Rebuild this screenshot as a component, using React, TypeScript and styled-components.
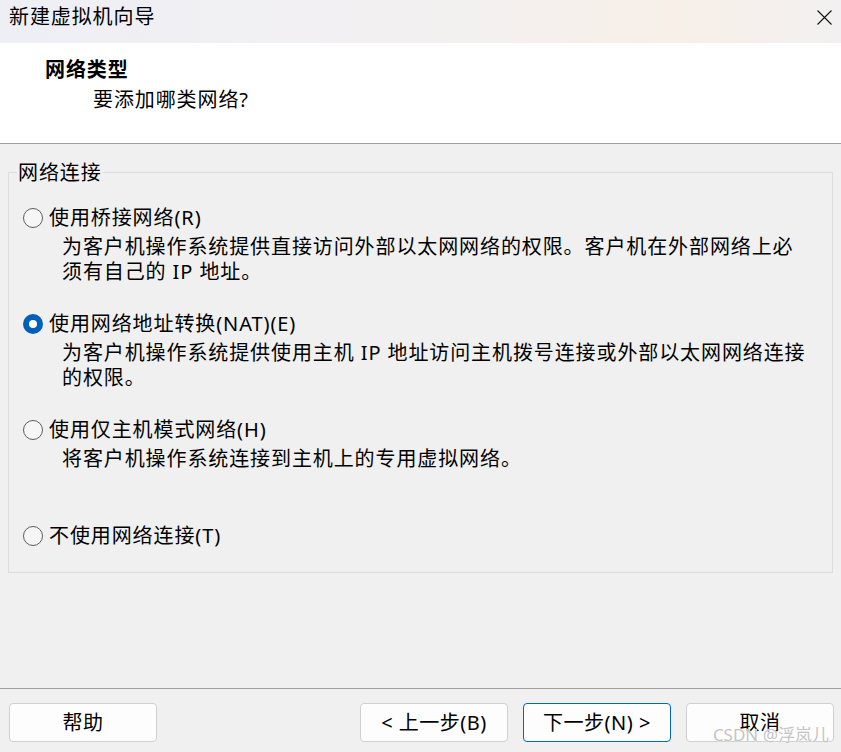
import React from "react";
import styled, { createGlobalStyle } from "styled-components";

const GlobalStyle = createGlobalStyle`
  html, body {
    margin: 0;
    padding: 0;
    background: #f0f0f0;
  }
  body {
    font-family: "Noto Sans", "Noto Sans CJK SC", sans-serif;
    color: #000;
  }
`;

const Window = styled.div`
  position: relative;
  width: 841px;
  height: 752px;
  display: flex;
  flex-direction: column;
  background: #f0f0f0;
  overflow: hidden;
  font-size: 20px;
  letter-spacing: 0.9px;
  line-height: 25px;
`;

const TitleBar = styled.div`
  height: 43px;
  flex: none;
  display: flex;
  align-items: center;
  justify-content: space-between;
  padding: 0 9px 0 9px;
  box-sizing: border-box;
  background: linear-gradient(90deg, #eeeff5 0%, #f3f0f0 55%, #f7efe8 80%, #f2f0f0 100%);
`;

const TitleText = styled.div`
  margin-top: -11px;
`;

const CloseButton = styled.div`
  width: 15px;
  height: 15px;
  margin-top: -9px;
  display: flex;
`;

const Header = styled.div`
  height: 101px;
  flex: none;
  background: #fff;
  border-bottom: 1px solid #a0a0a0;
  box-sizing: border-box;
  padding-top: 14px;
`;

const HeaderTitle = styled.div`
  padding-left: 45px;
  font-weight: 700;
`;

const HeaderSub = styled.div`
  padding-left: 93px;
  margin-top: 5px;
`;

const Body = styled.div`
  flex: 1;
  padding: 16px 8px 0 8px;
`;

const Group = styled.fieldset`
  margin: 0;
  padding: 20px 0 24px 14px;
  border: 1px solid #dcdcdc;
  min-width: 0;
`;

const Legend = styled.legend`
  margin-left: -6px;
  padding: 0 1px;
`;

const Option = styled.div<{ $last?: boolean }>`
  min-height: ${p => (p.$last ? "25px" : "106px")};
`;

const OptionRow = styled.label`
  display: flex;
  align-items: center;
  gap: 6px;
`;

const Radio = styled.span<{ $checked?: boolean }>`
  width: 20px;
  height: 20px;
  box-sizing: border-box;
  border-radius: 50%;
  flex: none;
  display: flex;
  align-items: center;
  justify-content: center;
  background: ${p => (p.$checked ? "#005fb8" : "#f6f6f6")};
  border: ${p => (p.$checked ? "none" : "1px solid #5d5d5d")};
  &::after {
    content: "";
    display: ${p => (p.$checked ? "block" : "none")};
    width: 8px;
    height: 8px;
    border-radius: 50%;
    background: #fff;
  }
`;

const Description = styled.div`
  padding-left: 39px;
  margin-top: 4px;
  width: 748px;
`;

const Footer = styled.div`
  flex: none;
  height: 64px;
  border-top: 1px solid #a0a0a0;
  box-sizing: border-box;
  padding: 14px 0 0 9px;
  display: flex;
  align-items: flex-start;
`;

const Button = styled.div<{ $primary?: boolean }>`
  width: 148px;
  height: 39px;
  box-sizing: border-box;
  border-radius: 4px;
  background: #fdfdfd;
  border: 1px solid ${p => (p.$primary ? "#0067c0" : "#d0d0d0")};
  display: flex;
  align-items: center;
  justify-content: center;
  letter-spacing: 0.5px;
`;

const ButtonGroup = styled.div`
  margin-left: auto;
  margin-right: 7px;
  display: flex;
  gap: 15px;
`;

const Watermark = styled.div`
  position: absolute;
  right: 12px;
  bottom: 5px;
  font-size: 17px;
  letter-spacing: 0;
  color: #c4c4c4;
  text-shadow: 0 0 1px #fff, 0 0 1px #fff;
  pointer-events: none;
`;

const options = [
  {
    label: "使用桥接网络(R)",
    desc: "为客户机操作系统提供直接访问外部以太网网络的权限。客户机在外部网络上必须有自己的 IP 地址。",
    checked: false,
  },
  {
    label: "使用网络地址转换(NAT)(E)",
    desc: "为客户机操作系统提供使用主机 IP 地址访问主机拨号连接或外部以太网网络连接的权限。",
    checked: true,
  },
  {
    label: "使用仅主机模式网络(H)",
    desc: "将客户机操作系统连接到主机上的专用虚拟网络。",
    checked: false,
  },
  { label: "不使用网络连接(T)", desc: "", checked: false },
];

export default function App() {
  return (
    <Window>
      <GlobalStyle />
      <TitleBar>
        <TitleText>新建虚拟机向导</TitleText>
        <CloseButton>
          <svg width="15" height="15" viewBox="0 0 15 15">
            <path d="M0.5 0.5 L14.5 14.5 M14.5 0.5 L0.5 14.5" stroke="#111" strokeWidth="1.1" />
          </svg>
        </CloseButton>
      </TitleBar>
      <Header>
        <HeaderTitle>网络类型</HeaderTitle>
        <HeaderSub>要添加哪类网络?</HeaderSub>
      </Header>
      <Body>
        <Group>
          <Legend>网络连接</Legend>
          {options.map((o, i) => (
            <Option key={o.label} $last={i === options.length - 1}>
              <OptionRow>
                <Radio $checked={o.checked} />
                {o.label}
              </OptionRow>
              {o.desc && <Description>{o.desc}</Description>}
            </Option>
          ))}
        </Group>
      </Body>
      <Footer>
        <Button>帮助</Button>
        <ButtonGroup>
          <Button>&lt; 上一步(B)</Button>
          <Button $primary>下一步(N) &gt;</Button>
          <Button>取消</Button>
        </ButtonGroup>
      </Footer>
      <Watermark>CSDN @浮岚儿</Watermark>
    </Window>
  );
}
